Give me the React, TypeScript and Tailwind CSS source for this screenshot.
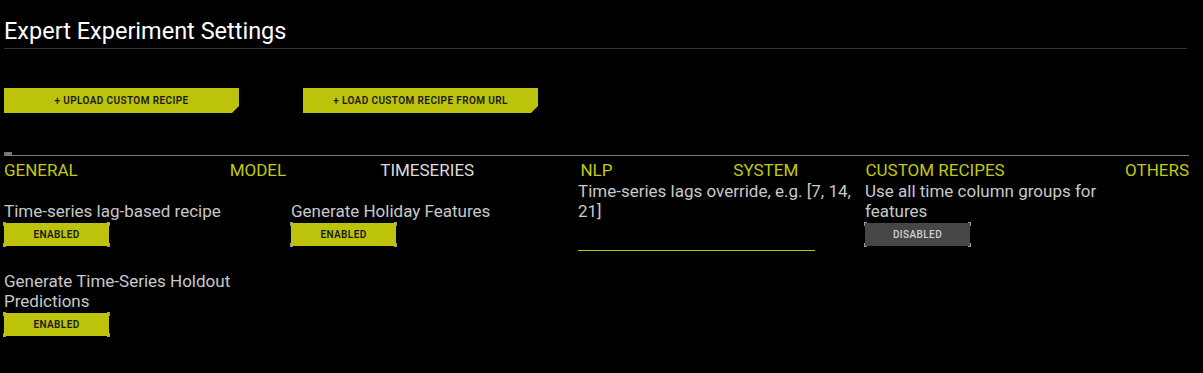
import type { ReactNode } from "react";

const tabs = ["GENERAL", "MODEL", "TIMESERIES", "NLP", "SYSTEM", "CUSTOM RECIPES", "OTHERS"];
const activeTab = "TIMESERIES";

const Corners = () => (
  <>
    <span className="absolute -left-px -top-px h-[4px] w-[3px] border-l border-t border-[#9a9a9a]" />
    <span className="absolute -right-px -top-px h-[4px] w-[3px] border-r border-t border-[#9a9a9a]" />
    <span className="absolute -bottom-px -left-px h-[4px] w-[3px] border-b border-l border-[#9a9a9a]" />
    <span className="absolute -bottom-px -right-px h-[4px] w-[3px] border-b border-r border-[#9a9a9a]" />
  </>
);

const Toggle = ({ enabled }: { enabled: boolean }) => (
  <div
    className={
      enabled
        ? "relative mt-[2px] mb-[5px] flex h-[23px] w-[105px] items-center justify-center bg-[#bcc30a] text-[10px] font-semibold tracking-[0.04em] text-[#1a1a1a]"
        : "relative mt-[2px] mb-[5px] flex h-[23px] w-[105px] items-center justify-center bg-[#464646] text-[10px] font-medium tracking-[0.04em] text-[#d0d0d0]"
    }
  >
    {enabled ? "ENABLED" : "DISABLED"}
    <Corners />
  </div>
);

const Setting = ({ label, children }: { label: string; children: ReactNode }) => (
  <div className="flex flex-col pr-[8px]">
    <p className="text-[17px] leading-[20px] text-[#c8c8c8]">{label}</p>
    {children}
  </div>
);

const ActionButton = ({ label }: { label: string }) => (
  <button className="flex h-[25px] w-[235px] items-center justify-center bg-[#bcc30a] text-[10px] font-semibold tracking-[0.04em] text-[#1a1a1a] [clip-path:polygon(0_0,100%_0,100%_calc(100%-7px),calc(100%-7px)_100%,0_100%)]">
    {label}
  </button>
);

export default function App() {
  return (
    <div className="min-h-[373px] w-[1203px] bg-black pl-[4px] pr-[14px] font-['Roboto',sans-serif]">
      <div className="pt-[17px]">
        <h1 className="text-[23.5px] leading-[28px] font-normal text-white">Expert Experiment Settings</h1>
        <div className="mt-[3px] h-px w-[1183px] bg-[#333]" />
      </div>

      <div className="mt-[39px] flex gap-[64px]">
        <ActionButton label="+ UPLOAD CUSTOM RECIPE" />
        <ActionButton label="+ LOAD CUSTOM RECIPE FROM URL" />
      </div>

      <div className="mt-[39px] w-[1185px]">
        <div className="h-[3px] w-[8px] rounded-t-[1px] bg-[#777]" />
        <div className="h-px bg-[#7a7a7a]" />
        <div className="grid grid-cols-7 pt-[3px]">
          {tabs.map((tab, i) => (
            <div
              key={tab}
              className={
                (i === 0 ? "text-left " : i === tabs.length - 1 ? "text-right " : "text-center ") +
                (tab === activeTab ? "text-[#dcdcdc] " : "text-[#c3ca0c] ") +
                "text-[17px] leading-[22px]"
              }
            >
              {tab}
            </div>
          ))}
        </div>
      </div>

      <div className="grid w-[1148px] grid-cols-4 items-end gap-y-[20px]">
        <Setting label="Time-series lag-based recipe">
          <Toggle enabled />
        </Setting>
        <Setting label="Generate Holiday Features">
          <Toggle enabled />
        </Setting>
        <Setting label="Time-series lags override, e.g. [7, 14, 21]">
          <div className="h-[30px] w-[237px] border-b border-[#bcc30a]" />
        </Setting>
        <Setting label="Use all time column groups for features">
          <Toggle enabled={false} />
        </Setting>
        <Setting label="Generate Time-Series Holdout Predictions">
          <Toggle enabled />
        </Setting>
      </div>
    </div>
  );
}
